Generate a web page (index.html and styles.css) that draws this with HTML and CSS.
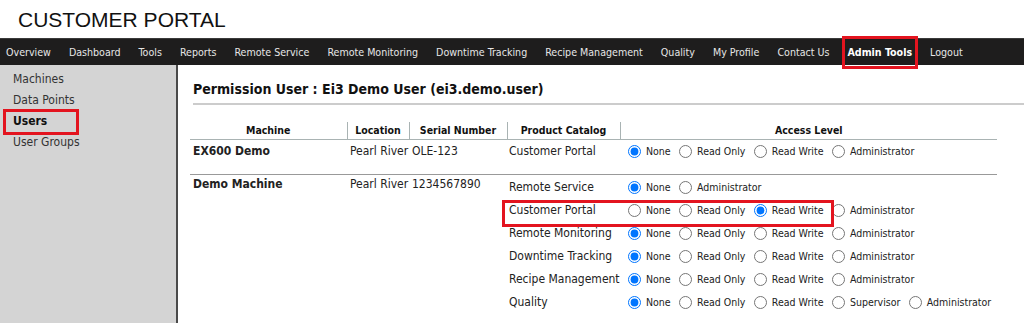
FILE: index.html
```html
<!DOCTYPE html>
<html lang="en">
<head>
    <meta charset="UTF-8">
    <title>Customer Portal - Permissions</title>
    <link rel="stylesheet" href="styles.css">
</head>
<body>
    <div class="brand">CUSTOMER PORTAL</div>

    <nav class="topnav">
        <a href="#">Overview</a>
        <a href="#">Dashboard</a>
        <a href="#">Tools</a>
        <a href="#">Reports</a>
        <a href="#">Remote Service</a>
        <a href="#">Remote Monitoring</a>
        <a href="#">Downtime Tracking</a>
        <a href="#">Recipe Management</a>
        <a href="#">Quality</a>
        <a href="#">My Profile</a>
        <a href="#">Contact Us</a>
        <a href="#" class="active marked">Admin Tools</a>
        <a href="#">Logout</a>
    </nav>

    <div class="layout">
        <aside class="sidebar">
            <a href="#">Machines</a>
            <a href="#">Data Points</a>
            <a href="#" class="active marked">Users</a>
            <a href="#">User Groups</a>
        </aside>

        <main class="content">
            <h2>Permission User : Ei3 Demo User (ei3.demo.user)</h2>

            <table class="perm-table">
                <colgroup>
                    <col class="col-machine">
                    <col class="col-location">
                    <col class="col-serial">
                    <col class="col-product">
                    <col class="col-access">
                </colgroup>
                <thead>
                    <tr>
                        <th>Machine</th>
                        <th>Location</th>
                        <th>Serial Number</th>
                        <th>Product Catalog</th>
                        <th>Access Level</th>
                    </tr>
                </thead>
                <tbody class="machine first">
                    <tr>
                        <td class="machine-name">EX600 Demo</td>
                        <td>Pearl River</td>
                        <td>OLE-123</td>
                        <td class="product">Customer Portal</td>
                        <td class="access">
                            <label><input type="radio" name="m1_cp" checked><span>None</span></label>
                            <label><input type="radio" name="m1_cp"><span>Read Only</span></label>
                            <label><input type="radio" name="m1_cp"><span>Read Write</span></label>
                            <label><input type="radio" name="m1_cp"><span>Administrator</span></label>
                        </td>
                    </tr>
                </tbody>
                <tbody class="machine">
                    <tr class="lead">
                        <td class="machine-name" rowspan="6">Demo Machine</td>
                        <td rowspan="6">Pearl River</td>
                        <td rowspan="6">1234567890</td>
                        <td class="product">Remote Service</td>
                        <td class="access">
                            <label><input type="radio" name="m2_rs" checked><span>None</span></label>
                            <label><input type="radio" name="m2_rs"><span>Administrator</span></label>
                        </td>
                    </tr>
                    <tr>
                        <td class="product marked">Customer Portal</td>
                        <td class="access">
                            <label><input type="radio" name="m2_cp"><span>None</span></label>
                            <label><input type="radio" name="m2_cp"><span>Read Only</span></label>
                            <label><input type="radio" name="m2_cp" checked><span>Read Write</span></label>
                            <label><input type="radio" name="m2_cp"><span>Administrator</span></label>
                        </td>
                    </tr>
                    <tr>
                        <td class="product">Remote Monitoring</td>
                        <td class="access">
                            <label><input type="radio" name="m2_rm" checked><span>None</span></label>
                            <label><input type="radio" name="m2_rm"><span>Read Only</span></label>
                            <label><input type="radio" name="m2_rm"><span>Read Write</span></label>
                            <label><input type="radio" name="m2_rm"><span>Administrator</span></label>
                        </td>
                    </tr>
                    <tr>
                        <td class="product">Downtime Tracking</td>
                        <td class="access">
                            <label><input type="radio" name="m2_dt" checked><span>None</span></label>
                            <label><input type="radio" name="m2_dt"><span>Read Only</span></label>
                            <label><input type="radio" name="m2_dt"><span>Read Write</span></label>
                            <label><input type="radio" name="m2_dt"><span>Administrator</span></label>
                        </td>
                    </tr>
                    <tr>
                        <td class="product">Recipe Management</td>
                        <td class="access">
                            <label><input type="radio" name="m2_rcp" checked><span>None</span></label>
                            <label><input type="radio" name="m2_rcp"><span>Read Only</span></label>
                            <label><input type="radio" name="m2_rcp"><span>Read Write</span></label>
                            <label><input type="radio" name="m2_rcp"><span>Administrator</span></label>
                        </td>
                    </tr>
                    <tr>
                        <td class="product">Quality</td>
                        <td class="access">
                            <label><input type="radio" name="m2_q" checked><span>None</span></label>
                            <label><input type="radio" name="m2_q"><span>Read Only</span></label>
                            <label><input type="radio" name="m2_q"><span>Read Write</span></label>
                            <label><input type="radio" name="m2_q"><span>Supervisor</span></label>
                            <label><input type="radio" name="m2_q"><span>Administrator</span></label>
                        </td>
                    </tr>
                </tbody>
            </table>
        </main>
    </div>
</body>
</html>
```

FILE: styles.css
```css
:root {
    --font-ui: "DejaVu Sans Condensed", "DejaVu Sans", sans-serif;
    --nav-bg: #1e1d1d;
    --nav-text: #e6e6e6;
    --sidebar-bg: #d4d4d4;
    --text-color: #222222;
    --line-color: #a9b3b3;
    --mark-color: #e3141f;
}

* {
    margin: 0;
    padding: 0;
    box-sizing: border-box;
}

body {
    background: #ffffff;
    color: var(--text-color);
    font-family: var(--font-ui);
    font-size: 12px;
    height: 100vh;
    display: flex;
    flex-direction: column;
    overflow: hidden;
}

a {
    color: inherit;
    text-decoration: none;
}

.brand {
    font-family: "Liberation Sans", Arial, sans-serif;
    font-size: 21px;
    line-height: 24px;
    color: #111111;
    padding: 8px 0 6px 18px;
}

.topnav {
    display: flex;
    align-items: center;
    height: 27px;
    background: var(--nav-bg);
    border-top: 1px solid #3a3a3a;
}

.topnav a {
    position: relative;
    color: var(--nav-text);
    font-size: 10.6px;
    line-height: 26px;
    padding: 0 9px 0 6px;
    margin-right: 3px;
}

.topnav a.active {
    color: #ffffff;
    font-weight: bold;
}

.topnav a.marked::after {
    content: "";
    position: absolute;
    left: 1px;
    right: 3px;
    top: -3px;
    bottom: -4px;
    border: 3px solid var(--mark-color);
}

.layout {
    flex: 1;
    display: flex;
}

.sidebar {
    width: 178px;
    flex-shrink: 0;
    background: var(--sidebar-bg);
    border-right: 2px solid #4a4a4a;
    padding-top: 4px;
    display: flex;
    flex-direction: column;
}

.sidebar a {
    position: relative;
    display: block;
    line-height: 21px;
    padding-left: 13px;
    color: #333333;
}

.sidebar a.active {
    font-weight: bold;
    color: #111111;
}

.sidebar a.marked::after {
    content: "";
    position: absolute;
    left: 3px;
    top: -2px;
    width: 70px;
    height: 20px;
    border: 3px solid var(--mark-color);
}

.content {
    flex: 1;
    padding: 16px 0 0 12px;
}

.content h2 {
    font-size: 14px;
    font-weight: bold;
    line-height: 16px;
    color: #111111;
    margin-left: 3px;
    padding-bottom: 6px;
    border-bottom: 2px solid #cccccc;
    margin-bottom: 17px;
}

.perm-table {
    width: 807px;
    table-layout: fixed;
    border-collapse: collapse;
}

.col-machine { width: 157px; }
.col-location { width: 62px; }
.col-serial { width: 98px; }
.col-product { width: 113px; }
.col-access { width: 377px; }

.perm-table th {
    font-size: 10.5px;
    font-weight: bold;
    line-height: 17px;
    color: #111111;
    text-align: center;
    padding: 0 3px;
    border-bottom: 1px solid var(--line-color);
    border-left: 1px solid var(--line-color);
    white-space: nowrap;
}

.perm-table th:first-child {
    border-left: none;
}

.perm-table td {
    line-height: 15px;
    padding: 2px 3px;
    vertical-align: top;
    white-space: nowrap;
}

.perm-table tbody.first td {
    padding-top: 4px;
    padding-bottom: 15px;
    border-bottom: 1px solid #999999;
}

.perm-table tbody.machine tr {
    height: 23px;
}

.perm-table tbody.machine tr.lead {
    height: 24px;
}

.perm-table tr.lead td.product,
.perm-table tr.lead td.access {
    padding-top: 3px;
}

.perm-table td.machine-name {
    font-weight: bold;
}

.perm-table td.product {
    position: relative;
    padding-left: 2px;
    vertical-align: middle;
}

.perm-table td.product.marked::after {
    content: "";
    position: absolute;
    left: -5px;
    top: 1px;
    width: 326px;
    height: 21px;
    border: 3px solid var(--mark-color);
}

.perm-table td.access {
    padding-left: 8px;
    vertical-align: middle;
}

.access label {
    display: inline-flex;
    align-items: center;
    font-size: 10.5px;
    margin-right: 5px;
    vertical-align: middle;
}

.access input[type="radio"] {
    width: 13px;
    height: 13px;
    margin: 0 5px 0 0;
}
```
